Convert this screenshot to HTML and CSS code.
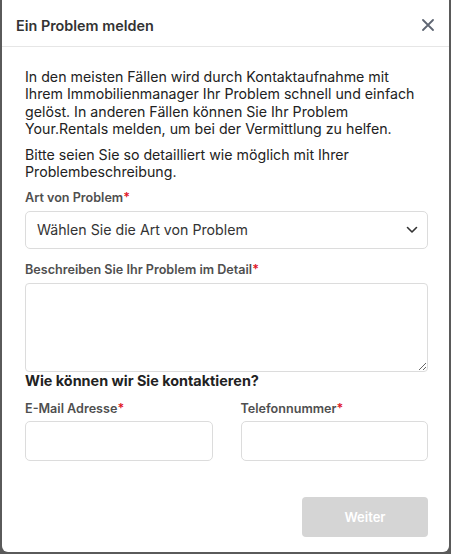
FILE: index.html
```html
<!DOCTYPE html>
<html lang="de">
<head>
<meta charset="UTF-8" />
<meta name="viewport" content="width=device-width, initial-scale=1" />
<title>Ein Problem melden</title>
<link rel="stylesheet" href="styles.css">
</head>
<body>
  <div class="backdrop">
    <div class="modal" role="dialog" aria-labelledby="modal-title">
      <div class="modal-header">
        <h2 id="modal-title">Ein Problem melden</h2>
        <button class="close" aria-label="Schließen">
          <svg width="12" height="12" viewBox="0 0 12 12"><path d="M1 1L11 11M11 1L1 11" stroke="#5f6673" stroke-width="1.8" stroke-linecap="round"/></svg>
        </button>
      </div>
      <div class="modal-body">
        <p>In den meisten Fällen wird durch Kontaktaufnahme mit Ihrem Immobilienmanager Ihr Problem schnell und einfach gelöst. In anderen Fällen können Sie Ihr Problem Your.Rentals melden, um bei der Vermittlung zu helfen.</p>
        <p>Bitte seien Sie so detailliert wie möglich mit Ihrer Problembeschreibung.</p>

        <div class="field first">
          <label>Art von Problem<span class="req">*</span></label>
          <div class="select">
            <span>Wählen Sie die Art von Problem</span>
            <svg width="12" height="8" viewBox="0 0 12 8"><path d="M1.5 1.5L6 6L10.5 1.5" fill="none" stroke="#333" stroke-width="1.6" stroke-linecap="round" stroke-linejoin="round"/></svg>
          </div>
        </div>

        <div class="field">
          <label>Beschreiben Sie Ihr Problem im Detail<span class="req">*</span></label>
          <textarea></textarea>
        </div>

        <h3>Wie können wir Sie kontaktieren?</h3>

        <div class="row">
          <div class="field">
            <label>E-Mail Adresse<span class="req">*</span></label>
            <input type="text">
          </div>
          <div class="field">
            <label>Telefonnummer<span class="req">*</span></label>
            <input type="text">
          </div>
        </div>

        <div class="actions">
          <button class="next" disabled>Weiter</button>
        </div>
      </div>
    </div>
  </div>
</body>
</html>
```
FILE: styles.css
```css
* {
  box-sizing: border-box;
}
body {
  margin: 0;
  background: #5a5a5a;
  font-family: Inter, 'Noto Sans', sans-serif;
  color: #222;
}
.backdrop {
  height: 554px;
  padding: 0 2px 2px 2px;
}
.modal {
  background: #fff;
  height: 552px;
  border-radius: 0 0 6px 6px;
  overflow: hidden;
}
.modal-header {
  height: 47px;
  border-bottom: 1px solid #e6e6e6;
  display: flex;
  align-items: center;
  justify-content: space-between;
  padding: 4px 15px 0 14px;
}
.modal-header h2 {
  margin: 0;
  font-size: 14.4px;
  font-weight: 600;
  color: #333;
}
.close {
  background: none;
  border: none;
  padding: 0;
  display: flex;
  cursor: pointer;
}
.modal-body {
  padding: 21px 21px 0 23px;
}
.modal-body p {
  margin: 0 0 9px;
  max-width: 398px;
  font-size: 14.2px;
  line-height: 17.3px;
  color: #222;
}
.field {
  display: flex;
  flex-direction: column;
  min-width: 0;
}
label {
  font-size: 12.6px;
  font-weight: 600;
  color: #4f4f4f;
  margin: 13px 0 6px;
}
.field.first label {
  margin-top: 0;
}
.row label {
  margin: 11px 0 5px;
}
.req {
  color: #e0121f;
}
.select {
  height: 38px;
  border: 1px solid #dcdcdc;
  border-radius: 5px;
  display: flex;
  align-items: center;
  justify-content: space-between;
  padding: 0 9px 0 11px;
  font-size: 14.2px;
  color: #333;
}
textarea {
  height: 89px;
  border: 1px solid #dcdcdc;
  border-radius: 4px;
  resize: vertical;
  font-family: inherit;
  display: block;
}
.modal-body h3 {
  margin: 0;
  font-size: 14.4px;
  line-height: 18px;
  font-weight: 700;
  color: #222;
}
.row {
  display: grid;
  grid-template-columns: 1fr 1fr;
  gap: 28px;
}
input {
  width: 100%;
  height: 40px;
  border: 1px solid #dcdcdc;
  border-radius: 5px;
  font-family: inherit;
}
.actions {
  display: flex;
  justify-content: flex-end;
  margin-top: 36px;
}
.next {
  width: 126px;
  height: 40px;
  border: none;
  border-radius: 4px;
  background: #d5d5d5;
  color: #fff;
  font-family: inherit;
  font-size: 13px;
  font-weight: 600;
}
```
